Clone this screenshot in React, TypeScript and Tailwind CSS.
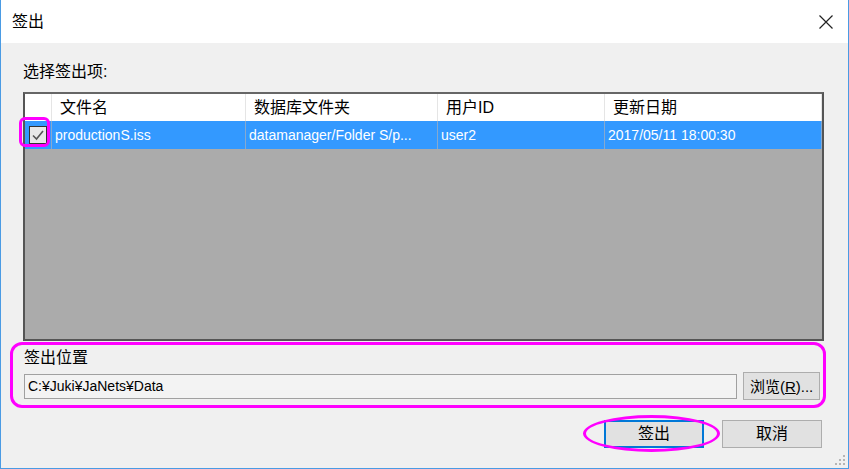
import React from 'react';

const font = { fontFamily: '"Liberation Sans", "Noto Sans CJK SC", sans-serif' };

const columns = [
    { label: '文件名', width: 'w-[194px]' },
    { label: '数据库文件夹', width: 'w-[192px]' },
    { label: '用户ID', width: 'w-[167px]' },
    { label: '更新日期', width: 'flex-1' },
];

const row = ['productionS.iss', 'datamanager/Folder S/p...', 'user2', '2017/05/11 18:00:30'];

const CloseIcon = () => (
    <svg width="16" height="16" viewBox="0 0 16 16" className="text-[#222]">
        <path d="M1.5 1.5 L14.5 14.5 M14.5 1.5 L1.5 14.5" stroke="currentColor" strokeWidth="1.2" fill="none" />
    </svg>
);

const Grip = () => (
    <svg width="10" height="10" viewBox="0 0 10 10">
        {[[8, 0], [8, 4], [4, 4], [8, 8], [4, 8], [0, 8]].map(([x, y]) => (
            <rect key={`${x}-${y}`} x={x} y={y} width="2" height="2" fill="#b5b5b5" />
        ))}
    </svg>
);

export default function App() {
    return (
        <div
            className="relative w-[849px] h-[469px] bg-[#f0f0f0] border-x border-b border-[#4a9be4] flex flex-col text-[#000]"
            style={font}
        >
            {/* Title bar */}
            <div className="h-[43px] bg-white flex items-center justify-between pl-[11px] pr-[14px] shrink-0">
                <span className="text-[16px] leading-none">签出</span>
                <CloseIcon />
            </div>

            <div className="flex flex-col pl-[22px] pr-[24px]">
                <div className="mt-[19px] text-[16px] leading-[20px]">选择签出项:</div>

                {/* List */}
                <div className="mt-[10px] w-[801px] h-[249px] border-2 border-[#555] border-t-[#666] bg-[#ababab] flex flex-col">
                    <div className="h-[27px] bg-white flex text-[16px] leading-[27px] shrink-0">
                        <div className="w-[27px] border-r border-[#e5e5e5]" />
                        {columns.map(c => (
                            <div key={c.label} className={`${c.width} pl-[8px] border-r border-[#e5e5e5] truncate`}>
                                {c.label}
                            </div>
                        ))}
                    </div>
                    <div className="h-[28px] bg-[#3399ff] flex text-white text-[14px] leading-[28px] shrink-0">
                        <div className="w-[27px] border-r border-[#86a9cf] flex items-center justify-center">
                            <div className="w-[18px] h-[18px] bg-[#e8e8e8] border border-[#333] flex items-center justify-center">
                                <svg width="14" height="14" viewBox="0 0 14 14">
                                    <path d="M2 7.5 L5.5 11 L12 3" stroke="#555" strokeWidth="1.6" fill="none" />
                                </svg>
                            </div>
                        </div>
                        {columns.map((c, i) => (
                            <div key={c.label} className={`${c.width} pl-[3px] border-r border-[#86a9cf] whitespace-nowrap overflow-hidden`}>
                                {row[i]}
                            </div>
                        ))}
                    </div>
                </div>

                {/* Checkout location */}
                <div className="-ml-[13px] mt-[1px] w-[816px] h-[66px] border-[3px] border-[#ff00ff] rounded-[12px] pl-[11px] pr-[3px] flex flex-col">
                    <div className="text-[16px] leading-[20px] mt-[3px]">签出位置</div>
                    <div className="flex items-center gap-[6px] mt-[4px]">
                        <div className="w-[714px] h-[25px] bg-[#f3f3f3] border border-[#a0a0a0] text-[14px] leading-[23px] pl-[3px]">
                            C:¥Juki¥JaNets¥Data
                        </div>
                        <button className="w-[77px] h-[28px] bg-[#e1e1e1] border border-[#adadad] text-[15px] leading-none flex items-center justify-center">
                            浏览(<span className="underline">R</span>)...
                        </button>
                    </div>
                </div>

                {/* Buttons */}
                <div className="flex justify-end gap-[18px] mt-[12px] pr-[2px]">
                    <button className="w-[100px] h-[28px] bg-[#e1e1e1] border-2 border-[#0078d7] text-[16px] leading-none">
                        签出
                    </button>
                    <button className="w-[100px] h-[28px] bg-[#e1e1e1] border border-[#adadad] text-[16px] leading-none">
                        取消
                    </button>
                </div>
            </div>

            {/* Annotations */}
            <div className="absolute left-[18px] top-[117px] w-[31px] h-[30px] border-[3px] border-[#ff00ff] rounded-[6px]" />
            <div className="absolute left-[582px] top-[415px] w-[137px] h-[37px] border-[3px] border-[#ff00ff] rounded-[50%]" />

            <div className="absolute right-[3px] bottom-[3px]">
                <Grip />
            </div>
        </div>
    );
}
